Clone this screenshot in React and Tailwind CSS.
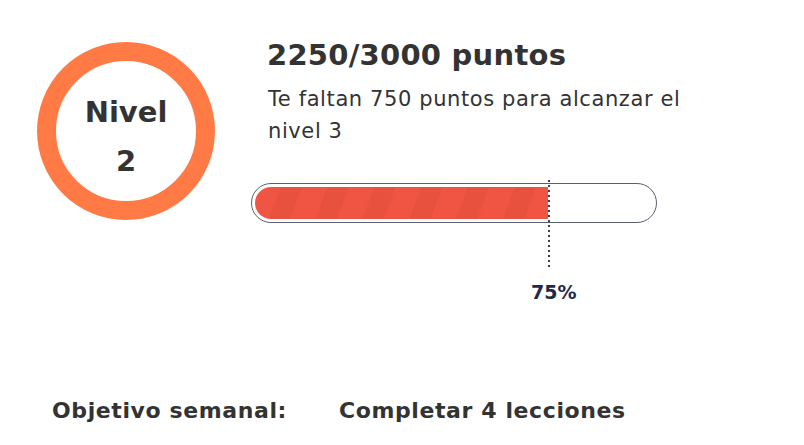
export default function App() {
    return (
        <div className="w-[804px] h-[445px] bg-white text-[#333333] font-['DejaVu_Sans',sans-serif] overflow-hidden">
            <div className="flex pt-[42px] pl-[37px]">
                <div className="w-[178px] h-[178px] shrink-0 rounded-full border-[19px] border-[#ff7a45] flex flex-col items-center justify-center pt-[12px]">
                    <span className="text-[29px] font-bold leading-[49px]">Nivel</span>
                    <span className="text-[29px] font-bold leading-[49px]">2</span>
                </div>
                <div className="ml-[36px] flex flex-col">
                    <h1 className="pl-[16px] text-[29px] tracking-[0.25px] font-bold leading-[36px] -mt-[5px]">2250/3000 puntos</h1>
                    <p className="pl-[17px] mt-[10px] text-[21px] tracking-[0.6px] leading-[32px] w-[470px]">
                        Te faltan 750 puntos para alcanzar el nivel 3
                    </p>
                    <div className="relative mt-[36px] w-[406px] h-[40px] rounded-full border-[1.5px] border-[#5a6070] p-[3px]">
                        <div className="h-full w-[293px] rounded-l-full bg-[repeating-linear-gradient(110deg,#f05442_0px,#f05442_24px,#e9513f_24px,#e9513f_44px)]"></div>
                        <div className="absolute left-[296px] -top-[4px] w-[2px] h-[88px] bg-[repeating-linear-gradient(to_bottom,#3a3f4b_0px,#3a3f4b_2px,transparent_2px,transparent_5px)]"></div>
                    </div>
                    <div className="relative h-[60px]">
                        <span className="absolute left-[280px] top-[60px] text-[19px] font-bold text-[#1f2a44] leading-none">75%</span>
                    </div>
                </div>
            </div>
            <div className="flex mt-[111px] pl-[52px] text-[22px] tracking-[0.6px] leading-[33px] font-bold">
                <span className="w-[287px]">Objetivo semanal:</span>
                <span>Completar 4 lecciones</span>
            </div>
        </div>
    );
}
